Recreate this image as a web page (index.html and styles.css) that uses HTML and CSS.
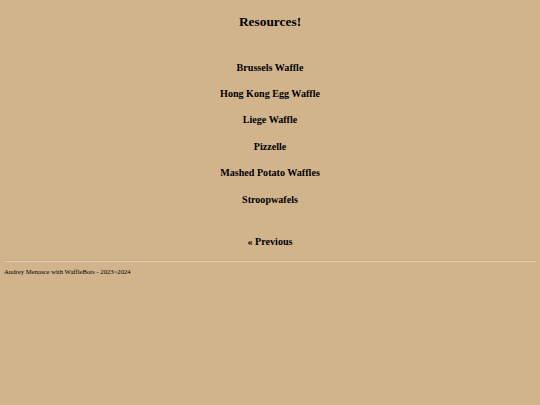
FILE: index.html
```html
<!DOCTYPE html>
<html>
<head>
<meta charset="utf-8">
<link rel="stylesheet" href="styles.css">
</head>
<body>
<main class="page">
  <h1 class="title">Resources!</h1>
  <ul class="links">
    <li><a href="#">Brussels Waffle</a></li>
    <li><a href="#">Hong Kong Egg Waffle</a></li>
    <li><a href="#">Liege Waffle</a></li>
    <li><a href="#">Pizzelle</a></li>
    <li><a href="#">Mashed Potato Waffles</a></li>
    <li><a href="#">Stroopwafels</a></li>
  </ul>
  <div class="nav"><a href="#">« Previous</a></div>
</main>
<hr class="rule">
<footer class="footer">Audrey Menasce with WaffleBots - 2023~2024</footer>
</body>
</html>
```
FILE: styles.css
```css
html, body {
  background: #d2b48c;
}
body {
  margin: 0 4px;
  padding-top: 12px;
  font-family: "Liberation Serif", "Times New Roman", serif;
  color: #000;
}
.title {
  margin: 0;
  font-size: 13.4px;
  line-height: 20px;
  font-weight: bold;
  text-align: center;
}
.links {
  list-style: none;
  margin: 22.6px 0 0;
  padding: 0;
}
.links li {
  text-align: center;
  line-height: 26.4px;
  font-size: 10.1px;
  font-weight: bold;
}
.links a, .nav a {
  color: #000;
  text-decoration: none;
}
.nav {
  margin-top: 19.4px;
  text-align: center;
  font-size: 10.1px;
  line-height: 20px;
  font-weight: bold;
}
.rule {
  margin: 8px 0 0;
  border: 0;
  border-top: 1px solid #c4a884;
  border-bottom: 1px solid #e0cfb6;
  height: 0;
}
.footer {
  margin-top: 5px;
  font-size: 6.7px;
  line-height: 10px;
}
```
